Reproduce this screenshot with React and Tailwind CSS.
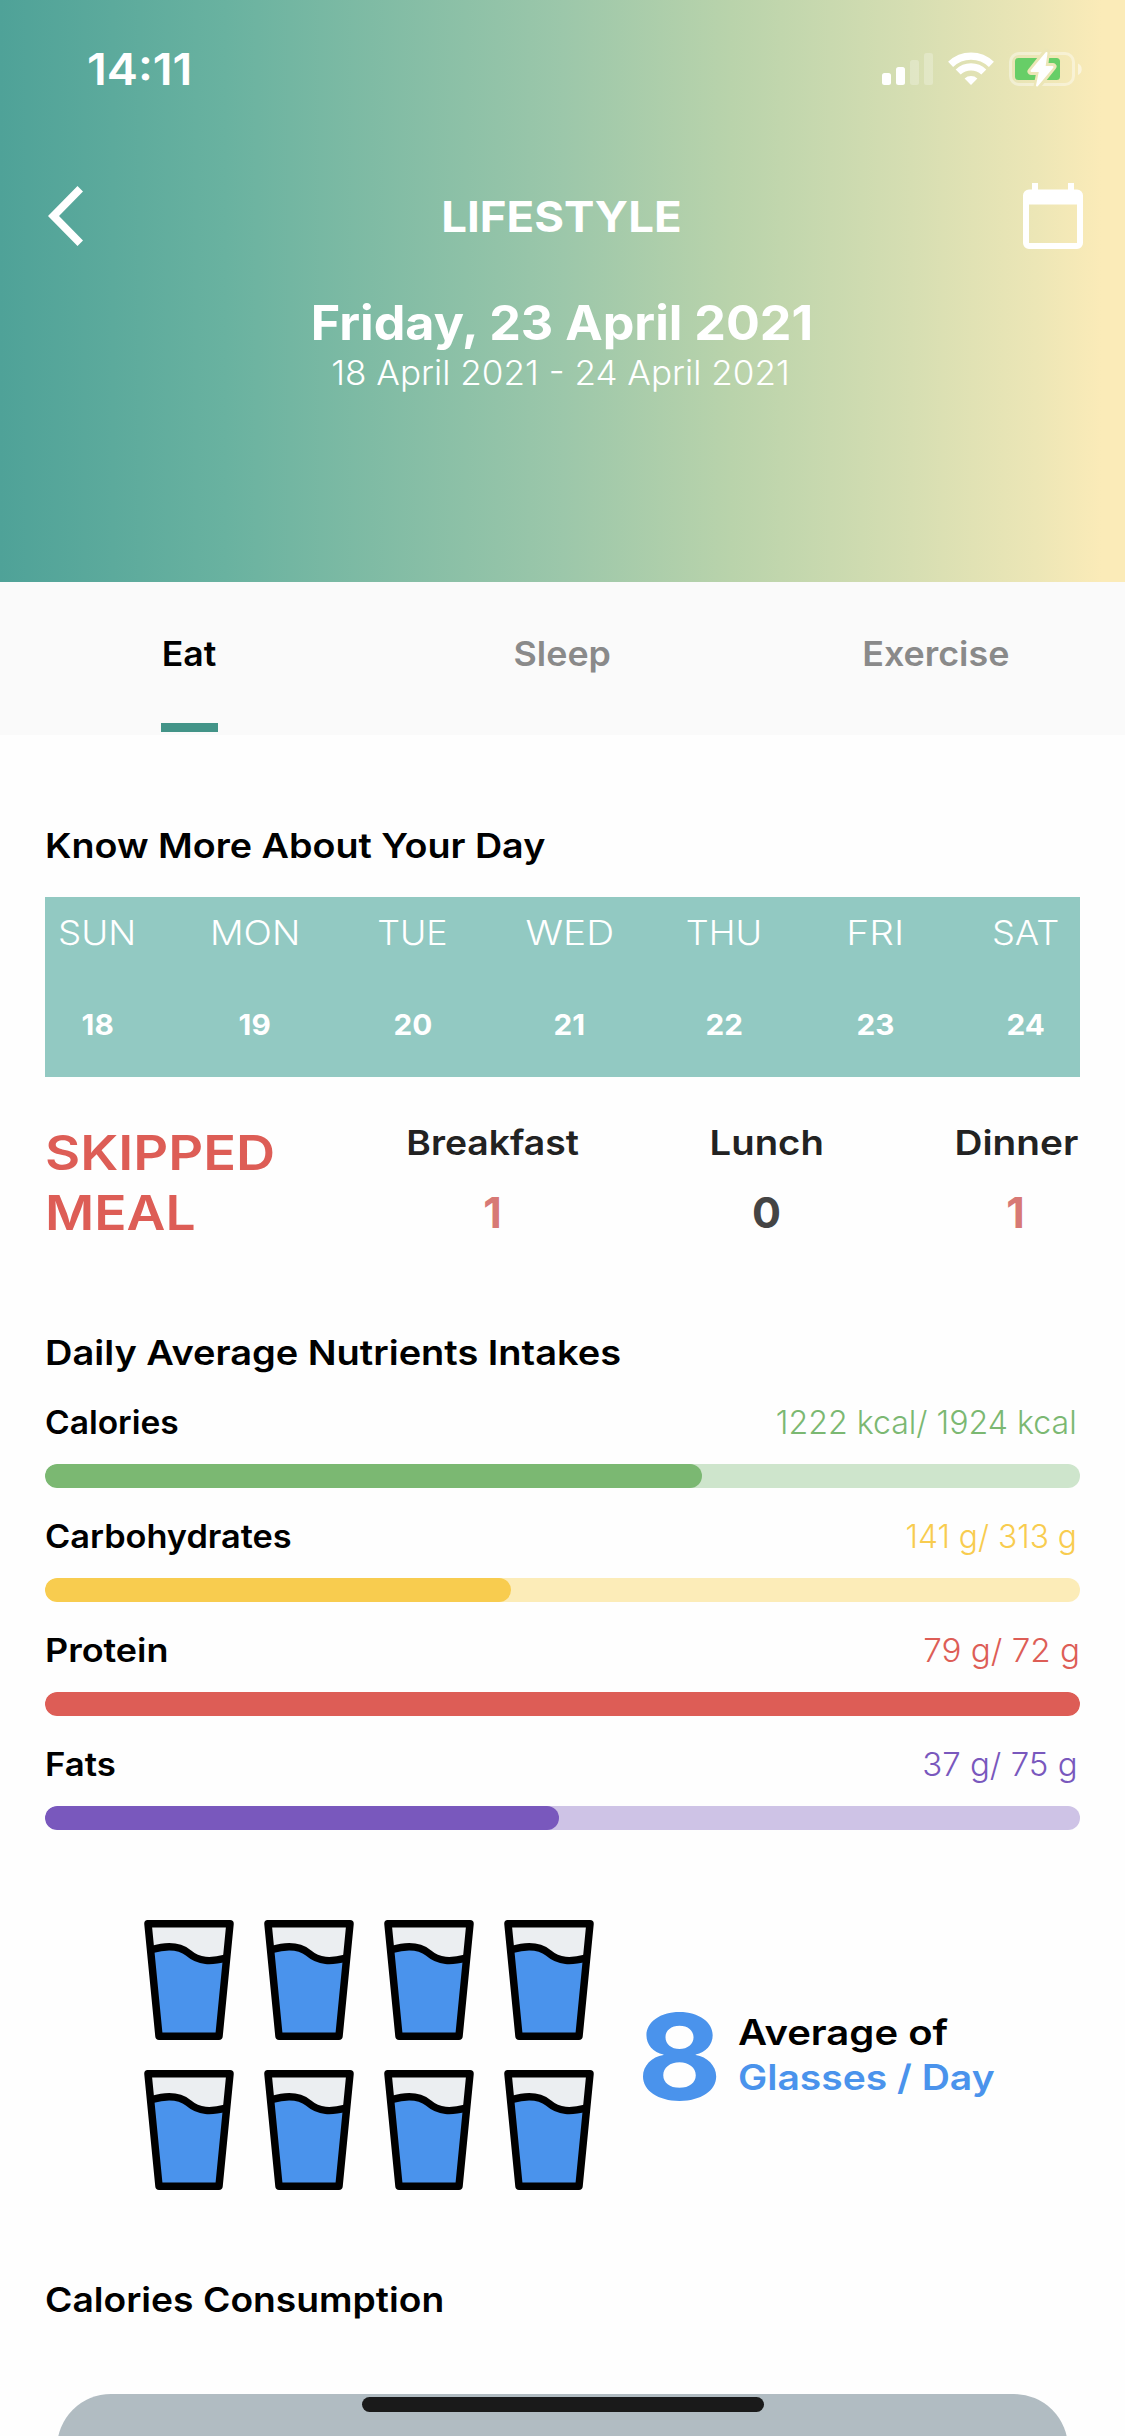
import React from "react";
import clsx from "clsx";

function T({ className, children }) {
  return <span className={clsx("inline-block whitespace-nowrap", className)}>{children}</span>;
}

function SignalIcon() {
  return (
    <svg width="51" height="34" viewBox="0 0 51 34" fill="#fff">
      <rect x="0" y="21" width="9" height="12" rx="2.5" />
      <rect x="14" y="15" width="9" height="18" rx="2.5" />
      <rect x="28" y="8" width="9" height="25" rx="2.5" opacity="0.25" />
      <rect x="42" y="1" width="9" height="32" rx="2.5" opacity="0.25" />
    </svg>
  );
}

function WifiIcon() {
  return (
    <svg width="46" height="34" viewBox="0 0 46 34" fill="none" stroke="#fff" strokeWidth="7.2">
      <path d="M2.6 12.4A29.3 29.3 0 0 1 43.4 12.4" />
      <path d="M10.2 20A18.5 18.5 0 0 1 35.8 20" />
      <path d="M23 33L16.6 26.4A10 10 0 0 1 29.4 26.4Z" fill="#fff" stroke="none" />
    </svg>
  );
}

function BatteryIcon() {
  return (
    <svg width="74" height="34" viewBox="0 0 74 34" className="overflow-visible">
      <rect x="1.5" y="1.5" width="63" height="31" rx="8.5" fill="none" stroke="#fff" strokeOpacity="0.4" strokeWidth="3" />
      <rect x="6" y="6" width="45" height="22" rx="3.5" fill="#67ce67" />
      <path d="M69 11.5c5 2 5 9.500 0 11.500z" fill="#fff" fillOpacity="0.5" />
      <path d="M37.500 0L22 19.500H31L28 34.500L44 14.500H35.500Z" fill="#ece6b7" stroke="#ece6b7" strokeWidth="7" strokeLinejoin="round" />
      <path d="M37.500 1L22.500 19H31L28 33.500L43.500 15H35.500Z" fill="#fff" stroke="#fff" strokeWidth="2" strokeLinejoin="round" />
    </svg>
  );
}

function BackIcon() {
  return (
    <svg width="36" height="60" viewBox="0 0 36 60" fill="#fff">
      <path d="M0 30L29.500 0L35 5.500L11 30L35 54.500L29.500 60Z" />
    </svg>
  );
}

function CalendarIcon() {
  return (
    <svg width="60" height="66" viewBox="0 0 60 66" fill="#fff">
      <path fillRule="evenodd" d="M9 0h6v6.500h30V0h6v6.500h3a6 6 0 0 1 6 6V60a6 6 0 0 1-6 6H6a6 6 0 0 1-6-6V12.500a6 6 0 0 1 6-6h3zM6 21.500V60h48V21.500z" />
    </svg>
  );
}

function Glass() {
  return (
    <svg width="90" height="120" viewBox="0 0 90 120">
      <path d="M4 4H86L75 116H15Z" fill="#ebeef1" />
      <path d="M6.500 30C18 26 33 25 43 33C55 42.500 66 42 83 37.500L75 116H15Z" fill="#4a93ec" />
      <path d="M8 29.500C20 26 34 24.500 44.500 33C55 42 67 42 82 38" fill="none" stroke="#000" strokeWidth="7.300" />
      <path d="M4 3.800H86L75 116.200H15Z" fill="none" stroke="#000" strokeWidth="7.500" strokeLinejoin="round" />
    </svg>
  );
}

const tabs = [
  { name: "Eat", active: true, pad: "pl-[4px]", cls: "scale-x-[1.048]" },
  { name: "Sleep", cls: "scale-x-[1.053]" },
  { name: "Exercise", pad: "pr-[4px]", cls: "scale-x-[1.055]" },
];

const days = [
  { day: "SUN", date: 18, w: "w-[79px]", cls: "scale-x-[1.081]" },
  { day: "MON", date: 19, w: "w-[86px]", cls: "scale-x-[1.099]" },
  { day: "TUE", date: 20, w: "w-[79px]", cls: "scale-x-[1.053]" },
  { day: "WED", date: 21, w: "w-[85px]", cls: "scale-x-[1.143]" },
  { day: "THU", date: 22, w: "w-[74px]", cls: "scale-x-[1.062]" },
  { day: "FRI", date: 23, w: "w-[79px]", cls: "scale-x-[1.144]" },
  { day: "SAT", date: 24, w: "w-[72px]", cls: "scale-x-[1.067]" },
];

const meals = [
  { name: "Breakfast", n: 1, w: "w-[175px]", cls: "scale-x-[1.098]", num: "text-[#d77975]" },
  { name: "Lunch", n: 0, w: "w-[115px]", cls: "scale-x-[1.126]", num: "text-[#444444]" },
  { name: "Dinner", n: 1, w: "w-[127px]", cls: "scale-x-[1.14]", num: "text-[#d77975] pr-[2px]" },
];

const nutrients = [
  { name: "Calories", value: "1222 kcal/ 1924 kcal", pct: 63.5, cls: "scale-x-[1.047]", val: "scale-x-[1.004] text-[#7bb872] mr-[3px]", bar: "bg-[#7bb872]", track: "bg-[#cee5cc]" },
  { name: "Carbohydrates", value: "141 g/ 313 g", pct: 45, cls: "scale-x-[1.072]", val: "scale-x-[0.991] text-[#f8cc4f] mr-[3px]", bar: "bg-[#f8cc4f]", track: "bg-[#fcecb8]" },
  { name: "Protein", value: "79 g/ 72 g", pct: 100, cls: "scale-x-[1.123]", val: "scale-x-[1.038] text-[#dd5d56]", bar: "bg-[#dd5d56]", track: "bg-[#f5c5c2]" },
  { name: "Fats", value: "37 g/ 75 g", pct: 49.7, cls: "scale-x-[1.086]", val: "scale-x-[1.032] text-[#7958bd] mr-[2px]", bar: "bg-[#7958bd]", track: "bg-[#cec3e6]" },
];

function Heading({ className, children }) {
  return <h2 className={clsx("flex items-center text-[34px] font-semibold text-black", className)}>{children}</h2>;
}

export default function App() {
  return (
    <div className="relative h-[2436px] w-[1125px] overflow-hidden bg-[#fefefe] font-['Inter',sans-serif] leading-none">
      <header className="h-[582px] bg-[linear-gradient(90deg,#4fa298_0%,#69b2a0_20%,#9cc7aa_50%,#b9d3ab_65%,#d6deb2_81%,#ece6b6_92%,#fbebb8_98%,#fbebb8_100%)] text-white">
        <div className="flex h-[138px] items-center justify-between pl-[87px] pr-[42px]">
          <T className="origin-left scale-x-[1.063] text-[44px] font-semibold">14:11</T>
          <div className="flex items-center gap-[15px]">
            <SignalIcon />
            <WifiIcon />
            <BatteryIcon />
          </div>
        </div>
        <div className="flex h-[156px] items-center justify-between pl-[48px] pr-[42px]">
          <div className="w-[60px]"><BackIcon /></div>
          <T className="mr-[8px] scale-x-[1.06] text-[43px] font-bold">LIFESTYLE</T>
          <CalendarIcon />
        </div>
        <div className="flex h-[57px] items-center justify-center pr-[2px]">
          <T className="scale-x-[1.047] text-[48px] font-bold">Friday, 23 April 2021</T>
        </div>
        <div className="flex h-[45px] items-center justify-center pr-[3px]">
          <T className="scale-x-[1.017] text-[34.5px] font-light">18 April 2021 - 24 April 2021</T>
        </div>
      </header>

      <nav className="grid h-[153px] grid-cols-3 bg-[#fafafa]">
        {tabs.map((t) => (
          <div key={t.name} className={clsx("flex flex-col items-center pt-[3px]", t.pad)}>
            <div className={clsx("flex h-[138px] items-center text-[34px] font-semibold", t.active ? "text-black" : "text-[#8a8a8a]")}>
              <T className={t.cls}>{t.name}</T>
            </div>
            {t.active && <div className="h-[9px] w-[57px] bg-[#439488]" />}
          </div>
        ))}
      </nav>

      <main className="px-[45px]">
        <Heading className="h-[162px] pt-[60px]">
          <T className="origin-left scale-x-[1.108]">Know More About Your Day</T>
        </Heading>

        <section className="flex h-[180px] gap-[75px] bg-[#92c9c2] pl-[13px] text-white">
          {days.map((d) => (
            <div key={d.day} className={clsx("flex shrink-0 flex-col items-center", d.w)}>
              <div className="flex h-[71px] items-center text-[34px] font-light"><T className={d.cls}>{d.day}</T></div>
              <div className="mt-[21px] flex h-[71px] items-center text-[29px] font-bold"><T className="scale-x-[1.025]">{d.date}</T></div>
            </div>
          ))}
        </section>

        <section className="mt-[46px] flex h-[119px]">
          <div className="w-[360px] text-[48px] font-semibold leading-[60px] text-[#dd5d56]">
            <div><T className="origin-left scale-x-[1.129]">SKIPPED</T></div>
            <div><T className="origin-left scale-x-[1.112]">MEAL</T></div>
          </div>
          <div className="flex flex-1 justify-between">
            {meals.map((m) => (
              <div key={m.name} className={clsx("flex flex-col items-center", m.w)}>
                <div className="flex h-[42px] items-center text-[34px] font-semibold text-[#222222]"><T className={m.cls}>{m.name}</T></div>
                <div className={clsx("mt-[20px] flex h-[61px] items-center text-[43px] font-bold", m.num)}>{m.n}</div>
              </div>
            ))}
          </div>
        </section>

        <Heading className="mt-[75px] h-[72px]">
          <T className="origin-left scale-x-[1.117]">Daily Average Nutrients Intakes</T>
        </Heading>
        <section>
          {nutrients.map((n) => (
            <div key={n.name} className="pb-[15px]">
              <div className="mb-2 flex h-[67px] items-center justify-between text-[32px]">
                <T className={clsx("origin-left font-semibold text-black", n.cls)}>{n.name}</T>
                <T className={clsx("origin-right font-light", n.val)}>{n.value}</T>
              </div>
              <div className={clsx("h-6 overflow-hidden rounded-full", n.track)}>
                <div className={clsx("h-full rounded-full", n.bar)} style={{ width: `${n.pct}%` }} />
              </div>
            </div>
          ))}
        </section>

        <section className="mt-[75px] flex h-[270px] items-center pl-[99px]">
          <div className="grid grid-cols-4 gap-[30px]">
            {Array.from({ length: 8 }, (_, i) => <Glass key={i} />)}
          </div>
          <div className="ml-[43px] w-[101px] pt-[3px] text-[120px] font-bold text-[#4a93ec]">
            <T className="origin-left scale-x-[1.09]">8</T>
          </div>
          <div className="text-[35px] font-semibold leading-[45px]">
            <div className="text-black"><T className="origin-left scale-x-[1.144]">Average of</T></div>
            <div className="text-[#4a93ec]"><T className="origin-left scale-x-[1.115]">Glasses / Day</T></div>
          </div>
        </section>

        <Heading className="mt-[75px] h-[70px]">
          <T className="origin-left scale-x-[1.095]">Calories Consumption</T>
        </Heading>
        <div className="mx-3 mt-[59px] h-[42px] overflow-hidden">
          <div className="h-[200px] rounded-t-[54px] bg-[#b1bcc2]" />
        </div>
      </main>

      <div className="absolute bottom-[24px] left-[362px] h-[15px] w-[402px] rounded-full bg-[#1a1a1a]" />
    </div>
  );
}
